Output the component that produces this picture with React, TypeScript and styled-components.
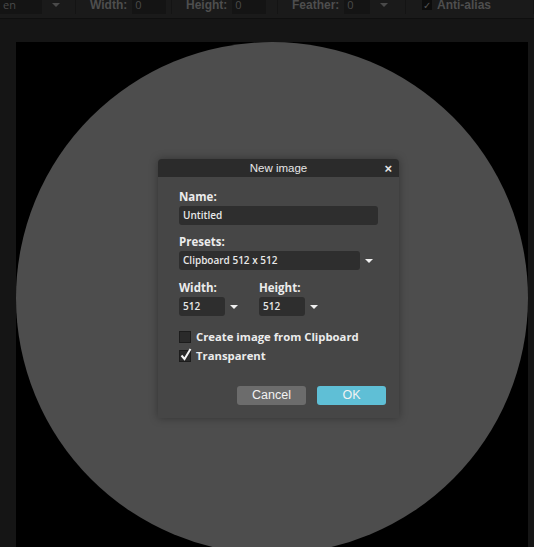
import styled, { createGlobalStyle } from 'styled-components';

const GlobalStyle = createGlobalStyle`
  html, body {
    margin: 0;
    padding: 0;
    background: #151515;
    overflow: hidden;
  }
  body {
    font-family: "Open Sans", sans-serif;
  }
`;

const Page = styled.div`
  position: relative;
  width: 534px;
  height: 547px;
  overflow: hidden;
  background: #151515;
`;

const Toolbar = styled.div`
  height: 18px;
  display: flex;
  align-items: flex-start;
  background: #1a1a1a;
  border-bottom: 1px solid #0f0f0f;
  overflow: hidden;
`;

const ToolGroup = styled.div<{ $w: number; $pl?: number }>`
  width: ${(p) => p.$w}px;
  height: 18px;
  flex-shrink: 0;
  display: flex;
  align-items: center;
  gap: 5px;
  padding-left: ${(p) => p.$pl ?? 14}px;
  border-right: 1px solid #141414;
  box-sizing: border-box;
  margin-top: -4px;
`;

const ToolLabel = styled.span`
  font-family: "Liberation Sans", Arial, sans-serif;
  font-weight: bold;
  font-size: 12px;
  color: #4e4e4e;
`;

const ToolField = styled.div<{ $w: number }>`
  width: ${(p) => p.$w}px;
  height: 18px;
  background: #141414;
  color: #4a4a4a;
  font-size: 11px;
  line-height: 18px;
  padding-left: 3px;
  box-sizing: border-box;
`;

const ToolArrow = styled.span`
  width: 0;
  height: 0;
  border-left: 4px solid transparent;
  border-right: 4px solid transparent;
  border-top: 4px solid #4a4a4a;
  margin-left: 5px;
`;

const ToolCheck = styled.span`
  width: 10px;
  height: 10px;
  background: #0c0c0c;
  color: #555;
  font-size: 10px;
  line-height: 10px;
  text-align: center;
`;

const Workspace = styled.div`
  padding: 23px 6px 0 16px;
`;

const Canvas = styled.div`
  width: 512px;
  height: 512px;
  background: #000;
  display: flex;
`;

const Circle = styled.div`
  flex: 1;
  border-radius: 50%;
  background: #4d4d4d;
`;

const Dialog = styled.div`
  position: absolute;
  left: 158px;
  top: 159px;
  width: 241px;
  height: 259px;
  background: #464646;
  border-radius: 4px 4px 0 0;
  box-shadow: 0 0 8px rgba(0, 0, 0, 0.35);
  display: flex;
  flex-direction: column;
`;

const Header = styled.div`
  height: 18px;
  background: #2b2b2b;
  border-radius: 4px 4px 0 0;
  display: flex;
  align-items: center;
  justify-content: center;
  position: relative;
  color: #e6e6e6;
  font-family: "Liberation Sans", Arial, sans-serif;
  font-size: 11.5px;
`;

const Close = styled.span`
  position: absolute;
  right: 7px;
  top: 2px;
  font-size: 13px;
  font-weight: bold;
  color: #e6e6e6;
`;

const Body = styled.div`
  padding: 12px 13px 0 21px;
  display: flex;
  flex-direction: column;
`;

const Label = styled.div`
  font-family: "Open Sans", sans-serif;
  font-weight: bold;
  font-size: 11.5px;
  color: #ececec;
  line-height: 16px;
  height: 16px;
  margin-bottom: 1px;
`;

const Field = styled.div<{ $w: number }>`
  width: ${(p) => p.$w}px;
  height: 19px;
  background: #2e2e2e;
  border-radius: 3px;
  color: #e8e8e8;
  font-family: "Open Sans", sans-serif;
  font-weight: 600;
  font-size: 10px;
  line-height: 19px;
  padding-left: 4px;
  box-sizing: border-box;
`;

const Row = styled.div<{ $mb: number }>`
  display: flex;
  align-items: center;
  margin-bottom: ${(p) => p.$mb}px;
`;

const Arrow = styled.span`
  width: 0;
  height: 0;
  border-left: 4px solid transparent;
  border-right: 4px solid transparent;
  border-top: 4px solid #f0f0f0;
  margin-left: 5px;
  margin-top: 1px;
`;

const SizeGrid = styled.div`
  display: flex;
  margin-bottom: 11px;
`;

const SizeCol = styled.div`
  width: 80px;
  display: flex;
  flex-direction: column;
`;

const Section = styled.div`
  display: flex;
  flex-direction: column;
`;

const CheckRow = styled.label`
  display: flex;
  align-items: center;
  gap: 5px;
  height: 19px;
  font-family: "Open Sans", sans-serif;
  font-weight: bold;
  font-size: 11.3px;
  color: #ececec;
`;

const Box = styled.span`
  width: 10px;
  height: 10px;
  border: 1px solid #1c1c1c;
  background: #2a2a2a;
  position: relative;
`;

const Tick = styled.svg`
  position: absolute;
  left: 0;
  top: -3px;
`;

const Buttons = styled.div`
  display: flex;
  justify-content: flex-end;
  gap: 11px;
  margin-top: 21px;
`;

const Button = styled.div<{ $primary?: boolean }>`
  width: 69px;
  height: 19px;
  border-radius: 3px;
  background: ${(p) => (p.$primary ? '#5fbfd6' : '#6c6c6c')};
  color: #f2f2f2;
  font-family: "Liberation Sans", Arial, sans-serif;
  font-size: 12.5px;
  line-height: 19px;
  text-align: center;
`;

export default function App() {
  return (
    <Page>
      <GlobalStyle />
      <Toolbar>
        <ToolGroup $w={76} $pl={0}>
          <ToolField $w={42}>en</ToolField>
          <ToolArrow />
        </ToolGroup>
        <ToolGroup $w={96}>
          <ToolLabel>Width:</ToolLabel>
          <ToolField $w={34}>0</ToolField>
        </ToolGroup>
        <ToolGroup $w={106}>
          <ToolLabel>Height:</ToolLabel>
          <ToolField $w={34}>0</ToolField>
        </ToolGroup>
        <ToolGroup $w={128}>
          <ToolLabel>Feather:</ToolLabel>
          <ToolField $w={26}>0</ToolField>
          <ToolArrow />
        </ToolGroup>
        <ToolGroup $w={128} $pl={16}>
          <ToolCheck>✓</ToolCheck>
          <ToolLabel>Anti-alias</ToolLabel>
        </ToolGroup>
      </Toolbar>
      <Workspace>
        <Canvas>
          <Circle />
        </Canvas>
      </Workspace>
      <Dialog>
        <Header>
          New image
          <Close>×</Close>
        </Header>
        <Body>
          <Section>
            <Label>Name:</Label>
            <Row $mb={9}>
              <Field $w={199}>Untitled</Field>
            </Row>
          </Section>
          <Section>
            <Label>Presets:</Label>
            <Row $mb={10}>
              <Field $w={181}>Clipboard 512 x 512</Field>
              <Arrow />
            </Row>
          </Section>
          <SizeGrid>
            <SizeCol>
              <Label>Width:</Label>
              <Row $mb={0}>
                <Field $w={46}>512</Field>
                <Arrow />
              </Row>
            </SizeCol>
            <SizeCol>
              <Label>Height:</Label>
              <Row $mb={0}>
                <Field $w={46}>512</Field>
                <Arrow />
              </Row>
            </SizeCol>
          </SizeGrid>
          <CheckRow>
            <Box />
            Create image from Clipboard
          </CheckRow>
          <CheckRow>
            <Box>
              <Tick width="12" height="13" viewBox="0 0 12 13">
                <path d="M1.5 7.5 L4.5 11 L10.5 1" fill="none" stroke="#f4f4f4" strokeWidth="2" />
              </Tick>
            </Box>
            Transparent
          </CheckRow>
          <Buttons>
            <Button>Cancel</Button>
            <Button $primary>OK</Button>
          </Buttons>
        </Body>
      </Dialog>
    </Page>
  );
}
